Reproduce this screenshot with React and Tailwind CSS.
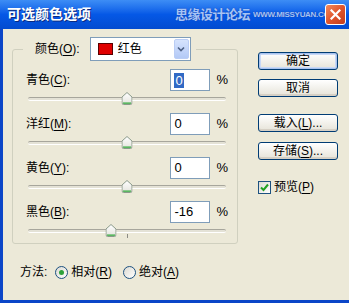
import React from "react";

const rows = [
  { label: "青色", key: "C", value: "0", pos: "50%", selected: true },
  { label: "洋红", key: "M", value: "0", pos: "50%" },
  { label: "黄色", key: "Y", value: "0", pos: "50%" },
  { label: "黑色", key: "B", value: "-16", pos: "42%", tick: true },
];

function Key({ children }) {
  return <span className="underline underline-offset-2">{children}</span>;
}

function Thumb() {
  return (
    <svg width="11" height="13" viewBox="0 0 11 13" className="block">
      <defs>
        <linearGradient id="tg" x1="0" x2="0" y1="0" y2="1">
          <stop offset="0" stopColor="#ffffff" />
          <stop offset="1" stopColor="#e3e3dc" />
        </linearGradient>
      </defs>
      <path d="M0.5 5 L5.5 0.5 L10.5 5 V11 Q10.5 12.5 9 12.5 H2 Q0.5 12.5 0.5 11 Z" fill="url(#tg)" stroke="#8a9a8a" />
      <path d="M1.5 10.5 H9.5 V11.2 Q9.5 11.8 8.8 11.8 H2.2 Q1.5 11.8 1.5 11.2 Z" fill="#2fa838" />
    </svg>
  );
}

function Slider({ pos, tick }) {
  return (
    <div className="relative ml-[2px] w-[198px] h-[14px] flex items-center">
      <div className="w-full h-[4px] rounded-[2px] border-t border-[#a7a69c] border-b border-b-white bg-[#e4e2d6]" />
      {tick && <div className="absolute left-[99px] top-[10px] w-px h-[4px] bg-[#8c8b84]" />}
      <div className="absolute top-0 -translate-x-1/2" style={{ left: pos }}>
        <Thumb />
      </div>
    </div>
  );
}

function XpButton({ children, primary }) {
  return (
    <div
      className={`w-[80px] h-[18px] rounded-[3px] border border-[#003c74] bg-gradient-to-b from-white to-[#e6e3d8] flex items-center justify-center text-[12px] text-black ${
        primary ? "shadow-[inset_0_0_0_1px_#a9c3ee,inset_0_0_0_2px_#c8d8f6]" : "shadow-[inset_0_-2px_0_#d6d0c5]"
      }`}
    >
      {children}
    </div>
  );
}

function Radio({ on }) {
  return (
    <div className="w-[13px] h-[13px] rounded-full border border-[#1c5180] bg-gradient-to-br from-[#dcdad2] to-white flex items-center justify-center">
      {on && <div className="w-[5px] h-[5px] rounded-full bg-[#2ea23a]" />}
    </div>
  );
}

export default function App() {
  return (
    <div className="w-[349px] h-[303px] flex flex-col overflow-hidden font-['Liberation_Sans','Noto_Sans_CJK_SC',sans-serif] text-[12px] text-black">
      {/* title bar */}
      <div className="h-[29px] shrink-0 flex items-center pl-[7px] bg-gradient-to-b from-[#3d8df5] via-[#0558e6] to-[#034bd0]">
        <span className="w-[90px] shrink-0 text-white font-bold text-[14px] [text-shadow:1px_1px_0_#0a2a80]">可选颜色选项</span>
        <span className="ml-[78px] w-[78px] shrink-0 text-[13px] font-bold text-[#a6c4f6] tracking-[-0.5px] [text-shadow:0_0_1px_#1a3a9a]">思缘设计论坛</span>
        <span className="w-[72px] shrink-0 whitespace-nowrap text-[8px] font-bold text-[#a6c4f6] tracking-[-0.3px] [text-shadow:0_0_1px_#1a3a9a]">WWW.MISSYUAN.COM</span>
        <div className="shrink-0 w-[21px] h-[21px] rounded-[3px] border border-white bg-gradient-to-br from-[#f08a5c] via-[#e0542c] to-[#c33d1c] flex items-center justify-center">
          <svg width="11" height="11" viewBox="0 0 11 11">
            <path d="M1.5 1.5 L9.5 9.5 M9.5 1.5 L1.5 9.5" stroke="#fff" strokeWidth="2.2" strokeLinecap="square" />
          </svg>
        </div>
      </div>

      {/* body */}
      <div className="flex-1 flex bg-[#ece9d8] border-l-[3px] border-b-[3px] border-[#0b46c8]">
        <div className="flex flex-col">
          <div className="ml-[9px] mt-[20px] w-[226px] h-[195px] border border-[#d0d0bf] rounded-[3px] flex flex-col">
            {/* legend */}
            <div className="mt-[-13px] ml-[10px] self-start flex items-center bg-[#ece9d8] pl-[12px] pr-[5px]">
              <span>颜色(<Key>O</Key>):</span>
              <div className="ml-[10px] w-[101px] h-[24px] border border-[#7f9db9] bg-white flex items-center pl-[7px] pr-px">
                <div className="w-[15px] h-[12px] bg-[#e00000] border border-[#5a0000]" />
                <span className="ml-[5px]">红色</span>
                <div className="ml-auto w-[15px] h-[20px] rounded-[2px] bg-gradient-to-b from-[#d6e3fd] to-[#b3c9f6] border border-[#bacdf5] flex items-center justify-center">
                  <svg width="8" height="6" viewBox="0 0 8 6">
                    <path d="M1 1.5 L4 4.5 L7 1.5" fill="none" stroke="#4d6185" strokeWidth="1.6" />
                  </svg>
                </div>
              </div>
            </div>

            <div className="mt-[8px] pl-[13px] pr-[9px] flex flex-col">
              {rows.map((r) => (
                <div key={r.key} className="flex flex-col h-[44px]">
                  <div className="flex items-center h-[22px]">
                    <span>
                      {r.label}(<Key>{r.key}</Key>):
                    </span>
                    <div className="ml-auto w-[40px] h-[22px] border border-[#7f9db9] bg-white flex items-center pl-[3px] text-[13px]">
                      {r.selected ? <span className="bg-[#316ac5] text-white px-px leading-[15px]">0</span> : <span>{r.value}</span>}
                    </div>
                    <span className="ml-[6px] text-[13px]">%</span>
                  </div>
                  <div className="mt-px">
                    <Slider pos={r.pos} tick={r.tick} />
                  </div>
                </div>
              ))}
            </div>
          </div>

          <div className="ml-[17px] mt-[20px] flex items-center h-[16px]">
            <span>方法:</span>
            <div className="ml-[8px]"><Radio on /></div>
            <span className="ml-[3px]">相对(<Key>R</Key>)</span>
            <div className="ml-[11px]"><Radio /></div>
            <span className="ml-[3px]">绝对(<Key>A</Key>)</span>
          </div>
        </div>

        <div className="ml-[20px] mt-[23px] flex flex-col">
          <XpButton primary>确定</XpButton>
          <div className="mt-[9px]"><XpButton>取消</XpButton></div>
          <div className="mt-[17px]"><XpButton>载入(<Key>L</Key>)...</XpButton></div>
          <div className="mt-[10px]"><XpButton>存储(<Key>S</Key>)...</XpButton></div>
          <div className="mt-[18px] flex items-center">
            <div className="w-[13px] h-[13px] border border-[#1c5180] bg-gradient-to-br from-[#dcdad2] to-white flex items-center justify-center">
              <svg width="9" height="9" viewBox="0 0 9 9">
                <path d="M1 4.5 L3.5 7 L8 1.5" fill="none" stroke="#21a121" strokeWidth="2" />
              </svg>
            </div>
            <span className="ml-[3px]">预览(<Key>P</Key>)</span>
          </div>
        </div>
      </div>
    </div>
  );
}
